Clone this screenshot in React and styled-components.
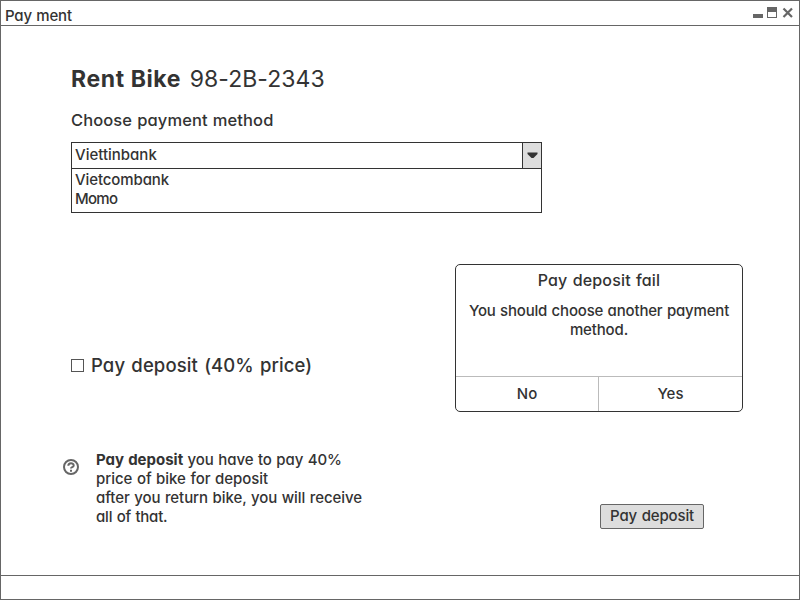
import React from "react";
import styled, { createGlobalStyle } from "styled-components";

const ink = "#333333";
const frame = "#666666";

const GlobalStyle = createGlobalStyle`
  * { box-sizing: border-box; }
  body { margin: 0; background: #ffffff; }
  button { font: inherit; color: inherit; letter-spacing: inherit; word-spacing: inherit; }
`;

const Window = styled.div`
  position: relative;
  display: flex;
  flex-direction: column;
  width: 800px;
  height: 600px;
  border: 1px solid ${frame};
  background: #ffffff;
  color: ${ink};
  font-family: Inter, "Liberation Sans", sans-serif;
  font-feature-settings: "cv11" 1;
  font-size: 15px;
  font-weight: 450;
  line-height: 19px;
  white-space: nowrap;
`;

const TitleBar = styled.header`
  display: flex;
  justify-content: space-between;
  height: 25px;
  padding: 5px 5px 0 4px;
  border-bottom: 1px solid ${frame};
`;

const Controls = styled.svg`
  display: block;
`;

const Label = styled.span`
  font-size: ${(p) => p.$size || 15}px;
  letter-spacing: ${(p) => p.$track || 0}px;
  word-spacing: ${(p) => p.$gap || 0}px;
`;

const Body = styled.main`
  flex: 1;
  display: flex;
  flex-direction: column;
  padding: 38px 95px 0 62px;
`;

const Heading = styled.h1`
  margin: 0 0 0 8px;
  font-size: 23px;
  font-weight: 400;
  line-height: 30px;
`;

const Strong = styled.strong`
  font-weight: 700;
  letter-spacing: ${(p) => p.$track || 0}px;
`;

const FieldLabel = styled.div`
  height: 19px;
  margin: 17px 0 12px 8px;
`;

const Select = styled.div`
  width: 471px;
  height: 71px;
  margin-left: 8px;
  border: 1px solid ${ink};
`;

const SelectValue = styled.div`
  display: flex;
  justify-content: space-between;
  height: 26px;
  padding-left: 3px;
  line-height: 24px;
  border-bottom: 1px solid ${ink};
`;

const Arrow = styled.div`
  width: 19px;
  border-left: 1px solid ${ink};
  background: #dddddd;
`;

const Options = styled.ul`
  margin: 0;
  padding: 1px 0 0 3px;
  list-style: none;
`;

const CheckRow = styled.label`
  display: flex;
  align-items: center;
  gap: 7px;
  height: 24px;
  margin: 140px 0 0 8px;
`;

const Box = styled.span`
  width: 13px;
  height: 13px;
  border: 1px solid #555555;
`;

const BottomRow = styled.div`
  display: flex;
  justify-content: space-between;
  margin-top: 73px;
`;

const Note = styled.div`
  display: flex;
  gap: 16px;
`;

const HelpIcon = styled.svg`
  margin-top: 9px;
`;

const NoteText = styled.div`
  display: flex;
  flex-direction: column;
`;

const PayButton = styled.button`
  width: 104px;
  height: 25px;
  margin-top: 54px;
  padding: 0 0 2px;
  border: 1px solid ${frame};
  border-radius: 2px;
  background: #dddddd;
`;

const Dialog = styled.section`
  position: absolute;
  left: 454px;
  top: 263px;
  display: flex;
  flex-direction: column;
  width: 288px;
  height: 148px;
  border: 1px solid ${ink};
  border-radius: 5px;
  background: #ffffff;
  text-align: center;
`;

const DialogTitle = styled.div`
  margin-top: 6px;
`;

const DialogText = styled.div`
  flex: 1;
  margin-top: 11px;
`;

const Line = styled.div`
  height: 19px;
`;

const Actions = styled.div`
  display: grid;
  grid-template-columns: 142px 1fr;
  height: 35px;
  border-top: 1px solid #bbbbbb;
`;

const Action = styled.button`
  padding: 0 0 2px;
  border: 0;
  border-left: ${(p) => (p.$divided ? "1px solid #bbbbbb" : "0")};
  background: transparent;
`;

const StatusBar = styled.footer`
  height: 24px;
  border-top: 1px solid ${frame};
`;

export default function App() {
  return (
    <Window>
      <GlobalStyle />
      <TitleBar>
        <Label $track={-0.2} $gap={0.7}>Pay ment</Label>
        <Controls width="41" height="12" viewBox="0 0 41 12" fill={frame} shapeRendering="crispEdges">
          <rect x="0" y="8" width="10" height="4" />
          <path fillRule="evenodd" d="M14 1h10v11H14zM15 6v5h8V6z" />
          <path d="M30.5 2.5l8.5 8.5M39 2.5l-8.5 8.5" stroke={frame} strokeWidth="2.2" shapeRendering="auto" />
        </Controls>
      </TitleBar>
      <Body>
        <Heading>
          <Strong $track={0.6}>Rent Bike</Strong> <Label $size={23} $track={0.05}>&#8202;98-2B-2343</Label>
        </Heading>
        <FieldLabel><Label $size={16.5} $track={0.1} $gap={0.6}>Choose payment method</Label></FieldLabel>
        <Select>
          <SelectValue>
            <Label>Viettinbank</Label>
            <Arrow>
              <svg width="18" height="25" viewBox="0 0 18 25"><path d="M4.5 9.5h10v1.5l-4 4h-2l-4-4z" fill={ink} /></svg>
            </Arrow>
          </SelectValue>
          <Options>
            <li><Label $track={-0.1}>Vietcombank</Label></li>
            <li><Label $track={-0.7}>Momo</Label></li>
          </Options>
        </Select>
        <CheckRow>
          <Box />
          <Label $size={18.5} $track={0.1} $gap={1.2}>Pay deposit (40% price)</Label>
        </CheckRow>
        <BottomRow>
          <Note>
            <HelpIcon width="17" height="17" viewBox="0 0 17 17" fill="none" stroke={frame} strokeWidth="2">
              <circle cx="8" cy="8" r="7" />
              <path d="M5.3 6.800c.1-3.300 5.400-3.200 5.400-.3 0 1.900-2.700 1.500-2.700 3M8 10.700v2" />
            </HelpIcon>
            <NoteText>
              <Label $gap={0.5} $track={-0.06}><Strong>Pay deposit</Strong> you have to pay 40%</Label>
              <Label $gap={0.5} $track={-0.02}>price of bike for deposit</Label>
              <Label $gap={0.6} $track={-0.07}>after you return bike, you will receive</Label>
              <Label $gap={0.6} $track={-0.2}>all of that.</Label>
            </NoteText>
          </Note>
          <PayButton><Label $track={-0.15} $gap={0.8}>Pay deposit</Label></PayButton>
        </BottomRow>
      </Body>
      <Dialog role="dialog">
        <DialogTitle><Label $size={16} $track={0.18} $gap={0.7}>Pay deposit fail</Label></DialogTitle>
        <DialogText>
          <Line><Label $track={-0.18} $gap={0.6}>You should choose another payment</Label></Line>
          <Line><Label $track={-0.15}>method.</Label></Line>
        </DialogText>
        <Actions>
          <Action><Label>No</Label></Action>
          <Action $divided><Label>Yes</Label></Action>
        </Actions>
      </Dialog>
      <StatusBar />
    </Window>
  );
}
